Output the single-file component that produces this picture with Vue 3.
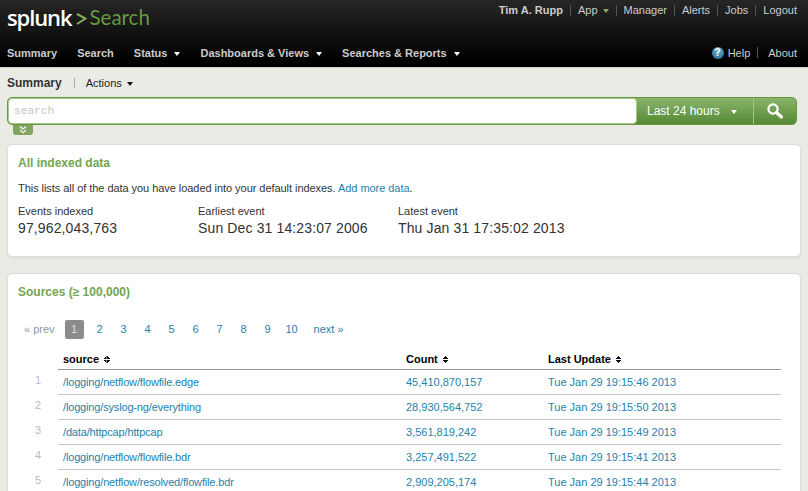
<template>
  <div class="page">
    <header class="masthead">
      <div class="top-row">
        <div class="logo">
          <span class="logo-word">splunk</span>
          <svg class="logo-gt" width="11" height="12" viewBox="0 0 11 12">
            <path d="M1 1 L9.5 5.6 L1 11" fill="none" stroke="#84b05a" stroke-width="2" />
          </svg>
          <span class="logo-app">Search</span>
        </div>
        <nav class="account">
          <b class="user">Tim A. Rupp</b>
          <i class="sep"></i>
          <a>App<span class="caret green"></span></a>
          <i class="sep"></i>
          <a>Manager</a>
          <i class="sep"></i>
          <a>Alerts</a>
          <i class="sep"></i>
          <a>Jobs</a>
          <i class="sep"></i>
          <a>Logout</a>
        </nav>
      </div>
      <div class="nav-row">
        <nav class="app-nav">
          <a v-for="item in navItems" :key="item.label">
            {{ item.label }}<span v-if="item.menu" class="caret white"></span>
          </a>
        </nav>
        <div class="help-links">
          <span class="help-icon">?</span>
          <a>Help</a>
          <i class="sep"></i>
          <a class="about">About</a>
        </div>
      </div>
    </header>

    <main class="content">
      <div class="crumbs">
        <b>Summary</b>
        <i class="crumb-sep"></i>
        <span class="actions">Actions<span class="caret black"></span></span>
      </div>

      <div class="search-wrap">
        <div class="search-bar">
          <div class="search-input">search</div>
          <div class="range">Last 24 hours<span class="caret white"></span></div>
          <div class="go">
            <svg width="18" height="18" viewBox="0 0 18 18">
              <circle cx="7" cy="7" r="4.6" fill="none" stroke="#fff" stroke-width="2.2" />
              <path d="M10.5 10.5 L15.5 15" stroke="#fff" stroke-width="3.2" stroke-linecap="round" />
            </svg>
          </div>
        </div>
        <div class="expander">
          <svg width="10" height="8" viewBox="0 0 10 8">
            <path d="M2 0.5 L5 3 L8 0.5 M2 4 L5 6.8 L8 4" fill="none" stroke="#fff" stroke-width="1.1" />
          </svg>
        </div>
      </div>

      <section class="card summary">
        <h2>All indexed data</h2>
        <p>This lists all of the data you have loaded into your default indexes. <a>Add more data</a>.</p>
        <div class="stats">
          <div v-for="stat in stats" :key="stat.label" class="stat" :style="{ width: stat.width + 'px' }">
            <div class="stat-label">{{ stat.label }}</div>
            <div class="stat-value">{{ stat.value }}</div>
          </div>
        </div>
      </section>

      <section class="card sources">
        <h2>Sources (≥ 100,000)</h2>
        <div class="pager">
          <span class="prev">« prev</span>
          <span class="page-num current">1</span>
          <a v-for="n in 9" :key="n" class="page-num">{{ n + 1 }}</a>
          <a class="next">next »</a>
        </div>
        <table>
          <thead>
            <tr>
              <th class="idx"></th>
              <th class="col-source">source<span class="sort"></span></th>
              <th class="col-count">Count<span class="sort"></span></th>
              <th>Last Update<span class="sort"></span></th>
            </tr>
          </thead>
          <tbody>
            <tr v-for="(row, i) in rows" :key="row.source">
              <td class="idx">{{ i + 1 }}</td>
              <td class="path"><a>{{ row.source }}</a></td>
              <td><a>{{ row.count }}</a></td>
              <td><a>{{ row.updated }}</a></td>
            </tr>
          </tbody>
        </table>
      </section>
    </main>
  </div>
</template>

<script setup>
const navItems = [
  { label: 'Summary' },
  { label: 'Search' },
  { label: 'Status', menu: true },
  { label: 'Dashboards & Views', menu: true },
  { label: 'Searches & Reports', menu: true }
]

const stats = [
  { label: 'Events indexed', value: '97,962,043,763', width: 180 },
  { label: 'Earliest event', value: 'Sun Dec 31 14:23:07 2006', width: 200 },
  { label: 'Latest event', value: 'Thu Jan 31 17:35:02 2013', width: 200 }
]

const rows = [
  { source: '/logging/netflow/flowfile.edge', count: '45,410,870,157', updated: 'Tue Jan 29 19:15:46 2013' },
  { source: '/logging/syslog-ng/everything', count: '28,930,564,752', updated: 'Tue Jan 29 19:15:50 2013' },
  { source: '/data/httpcap/httpcap', count: '3,561,819,242', updated: 'Tue Jan 29 19:15:49 2013' },
  { source: '/logging/netflow/flowfile.bdr', count: '3,257,491,522', updated: 'Tue Jan 29 19:15:41 2013' },
  { source: '/logging/netflow/resolved/flowfile.bdr', count: '2,909,205,174', updated: 'Tue Jan 29 19:15:44 2013' }
]
</script>

<style>
html, body {
  margin: 0;
  height: 491px;
  overflow: hidden;
  background: #ebebe6;
}
</style>

<style scoped>
.page {
  width: 808px;
  height: 491px;
  overflow: hidden;
  font-family: "Liberation Sans", Arial, sans-serif;
  font-size: 11px;
  color: #333;
}

.masthead {
  height: 67px;
  background: linear-gradient(#262626, #000 92%);
  border-bottom: 1px solid #ccc;
  box-sizing: content-box;
}

.top-row {
  height: 40px;
  display: flex;
  justify-content: space-between;
  padding: 0 11px 0 7px;
}

.logo {
  display: flex;
  align-items: center;
  height: 34px;
  white-space: nowrap;
}

.logo-word {
  font-family: "Open Sans", sans-serif;
  font-size: 22px;
  font-weight: 600;
  letter-spacing: -1.1px;
  color: #fff;
}

.logo-gt {
  margin: 3px 0 0 4px;
}

.logo-app {
  font-family: Lato, sans-serif;
  font-size: 20.5px;
  color: #659a41;
  margin-left: 3px;
}

.account {
  display: flex;
  align-items: center;
  height: 20px;
  color: #ccc;
}

.user {
  color: #ccc;
}

.sep {
  width: 1px;
  height: 11px;
  background: #555;
  margin: 0 7px;
}

.caret {
  display: inline-block;
  width: 0;
  height: 0;
  border-left: 3.5px solid transparent;
  border-right: 3.5px solid transparent;
  border-top: 4px solid #fff;
  vertical-align: 1px;
}

.caret.green {
  border-top-color: #84b05a;
  margin-left: 5px;
}

.app-nav .caret.white {
  margin-left: 7px;
}

.nav-row {
  height: 27px;
  display: flex;
  justify-content: space-between;
  padding: 0 11px 0 7px;
}

.app-nav {
  display: flex;
  gap: 20px;
  font-weight: bold;
  color: #ccc;
  line-height: 27px;
}

.help-links {
  display: flex;
  align-items: center;
  padding-bottom: 2px;
  color: #ccc;
}

.help-icon {
  width: 12px;
  height: 12px;
  border-radius: 50%;
  background: radial-gradient(circle at 50% 30%, #6fb0cc, #1f6a8c);
  color: #fff;
  font-size: 10px;
  font-weight: bold;
  line-height: 12px;
  text-align: center;
  margin-right: 4px;
}

.help-links .sep {
  margin: 0 10px 0 7px;
}

.content {
  padding: 0 7px;
}

.crumbs {
  display: flex;
  align-items: center;
  height: 28px;
  padding-top: 2px;
  box-sizing: border-box;
  color: #222;
}

.crumbs b {
  font-size: 12px;
  color: #333;
}

.crumb-sep {
  width: 1px;
  height: 10px;
  background: #aaa;
  margin: 0 11px 0 12px;
}

.caret.black {
  border-top-color: #111;
  margin-left: 5px;
}

.search-wrap {
  padding: 1px 0 0 0;
}

.search-bar {
  display: flex;
  height: 28px;
  box-sizing: border-box;
  margin-right: 11px;
  width: 790px;
  border-radius: 5px;
  background: linear-gradient(#8ab46a, #558934);
  border: 1px solid #65973f;
  overflow: hidden;
}

.search-input {
  width: 629px;
  background: #fff;
  border: 1px solid #a9c791;
  border-radius: 4px;
  box-sizing: border-box;
  padding-left: 5px;
  font-family: "Liberation Mono", monospace;
  font-size: 11px;
  line-height: 24px;
  color: #c4c4c4;
  letter-spacing: 0.1px;
}

.range {
  width: 117px;
  padding-left: 10px;
  box-sizing: border-box;
  color: #fff;
  font-size: 12px;
  line-height: 26px;
  border-right: 1px solid #a5c48c;
}

.range .caret.white {
  margin-left: 11px;
}

.go {
  flex: 1;
  display: flex;
  align-items: center;
  justify-content: center;
}

.expander {
  width: 20px;
  height: 10px;
  margin-left: 6px;
  background: #7ea45e;
  border-radius: 0 0 3px 3px;
  display: flex;
  align-items: center;
  justify-content: center;
}

.card {
  width: 794px;
  box-sizing: border-box;
  background: #fff;
  border-radius: 5px;
  border: 1px solid #ddd;
  box-shadow: 0 1px 2px rgba(0, 0, 0, 0.08);
  padding: 0 10px;
}

.card h2 {
  margin: 0;
  font-size: 12px;
  font-weight: bold;
  color: #73a550;
}

.card a {
  color: #2682aa;
}

.summary {
  height: 113px;
  margin-top: 9px;
  padding-top: 11px;
}

.summary p {
  margin: 12px 0 0;
  font-size: 11px;
  letter-spacing: -0.05px;
  color: #333;
}

.stats {
  display: flex;
  margin-top: 11px;
}

.stat-label {
  font-size: 11px;
  color: #333;
}

.stat-value {
  font-size: 14px;
  letter-spacing: 0.13px;
  color: #333;
  margin-top: 3px;
}

.sources {
  height: 240px;
  margin-top: 16px;
  padding-top: 11px;
}

.pager {
  display: flex;
  align-items: center;
  margin: 20px 0 0 6px;
  height: 20px;
  color: #888;
}

.prev {
  color: #8a9aa3;
  margin-right: 10px;
}

.page-num {
  width: 24px;
  text-align: center;
}

.page-num.current {
  width: 19px;
  height: 19px;
  line-height: 19px;
  background: #8c8c8c;
  color: #ddd;
  border-radius: 2px;
  margin-right: 4px;
}

.next {
  margin-left: 10px;
}

table {
  width: 763px;
  margin-top: 9px;
  border-collapse: collapse;
  font-size: 11px;
}

th {
  text-align: left;
  height: 21px;
  padding: 0 0 0 5px;
  color: #000;
  font-size: 11px;
  border-bottom: 1px solid #999;
}

th.idx {
  border-bottom: none;
  padding: 0;
}

td.idx {
  height: 20px;
  padding: 0 0 4px;
  text-align: center;
  color: #bbb;
  border-bottom: none;
}

.idx {
  width: 40px;
}

.col-source {
  width: 338px;
}

.col-count {
  width: 137px;
}

td {
  height: 24px;
  padding: 0 0 0 5px;
  border-bottom: 1px solid #c8c8c8;
}

.path {
  letter-spacing: -0.16px;
}

.sort {
  display: inline-block;
  width: 7px;
  height: 7px;
  margin-left: 4px;
  background:
    linear-gradient(to bottom right, transparent 50%, #111 50%) left top / 50% 3px no-repeat,
    linear-gradient(to bottom left, transparent 50%, #111 50%) right top / 50% 3px no-repeat,
    linear-gradient(to top right, transparent 50%, #111 50%) left bottom / 50% 3px no-repeat,
    linear-gradient(to top left, transparent 50%, #111 50%) right bottom / 50% 3px no-repeat;
}
</style>
